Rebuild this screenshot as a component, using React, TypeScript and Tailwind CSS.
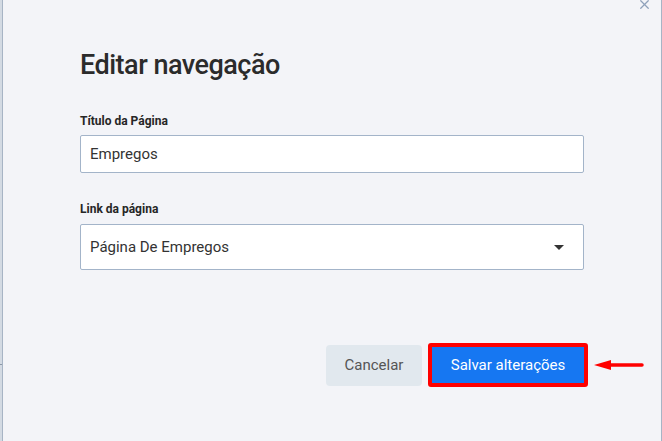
import { X } from 'lucide-react';

const font = { fontFamily: 'Roboto, "Noto Sans", sans-serif' };

function Label({ children }: { children: string }) {
    return (
        <label className="block text-[12px] leading-[16px] font-bold text-[#262626]">
            {children}
        </label>
    );
}

export default function App() {
    return (
        <div
            className="flex w-[662px] h-[441px] bg-[#f3f4f8] overflow-hidden"
            style={font}
        >
            {/* sliver of the page behind the modal */}
            <div className="w-[2px] h-full bg-[#d3dae3] flex flex-col">
                <div className="mt-[364px] h-[1px] w-full bg-[#8c98a8]" />
            </div>

            <div className="relative flex-1 border-l border-r border-[#a7b4c5]">
                <button className="absolute right-[9px] -top-[3px] text-[#8fa1ba]">
                    <X size={15} strokeWidth={2} />
                </button>

                <div className="pl-[77px] pt-[48px] w-[581px]">
                    <h2 className="text-[27px] leading-[34px] font-medium text-[#2b2b2b] tracking-[-0.5px]">
                        Editar navegação
                    </h2>

                    <div className="mt-[31px]">
                        <Label>Título da Página</Label>
                        <div className="mt-[6px] h-[38px] bg-white border border-[#a3b4c9] rounded-[2px] flex items-center px-[9px] text-[15px] text-[#333]">
                            Empregos
                        </div>
                    </div>

                    <div className="mt-[28px]">
                        <Label>Link da página</Label>
                        <div className="mt-[7px] h-[46px] bg-white border border-[#a3b4c9] rounded-[2px] flex items-center justify-between pl-[9px] pr-[19px] text-[15px] text-[#333]">
                            <span>Página De Empregos</span>
                            <span className="w-0 h-0 border-l-[5px] border-r-[5px] border-t-[5px] border-l-transparent border-r-transparent border-t-[#333]" />
                        </div>
                    </div>

                    <div className="mt-[73px] flex items-center justify-end -mr-[4px]">
                        <button className="w-[96px] h-[41px] rounded-[4px] bg-[#e1e8ee] text-[15px] text-[#555]">
                            Cancelar
                        </button>
                        <div className="relative ml-[6px] border-[4px] border-[#ff0000] rounded-[3px]">
                            <button className="w-[152px] h-[36px] bg-[#1677f2] text-[15px] text-white">
                                Salvar alterações
                            </button>
                            <svg
                                className="absolute left-[calc(100%+10px)] top-1/2 -translate-y-1/2"
                                width="50"
                                height="12"
                                viewBox="0 0 50 12"
                            >
                                <path d="M0 6 L17 1 L17 11 Z" fill="#ff0000" />
                                <path d="M15 6 H48" stroke="#ff0000" strokeWidth="3.5" strokeLinecap="round" />
                            </svg>
                        </div>
                    </div>
                </div>
            </div>
        </div>
    );
}
